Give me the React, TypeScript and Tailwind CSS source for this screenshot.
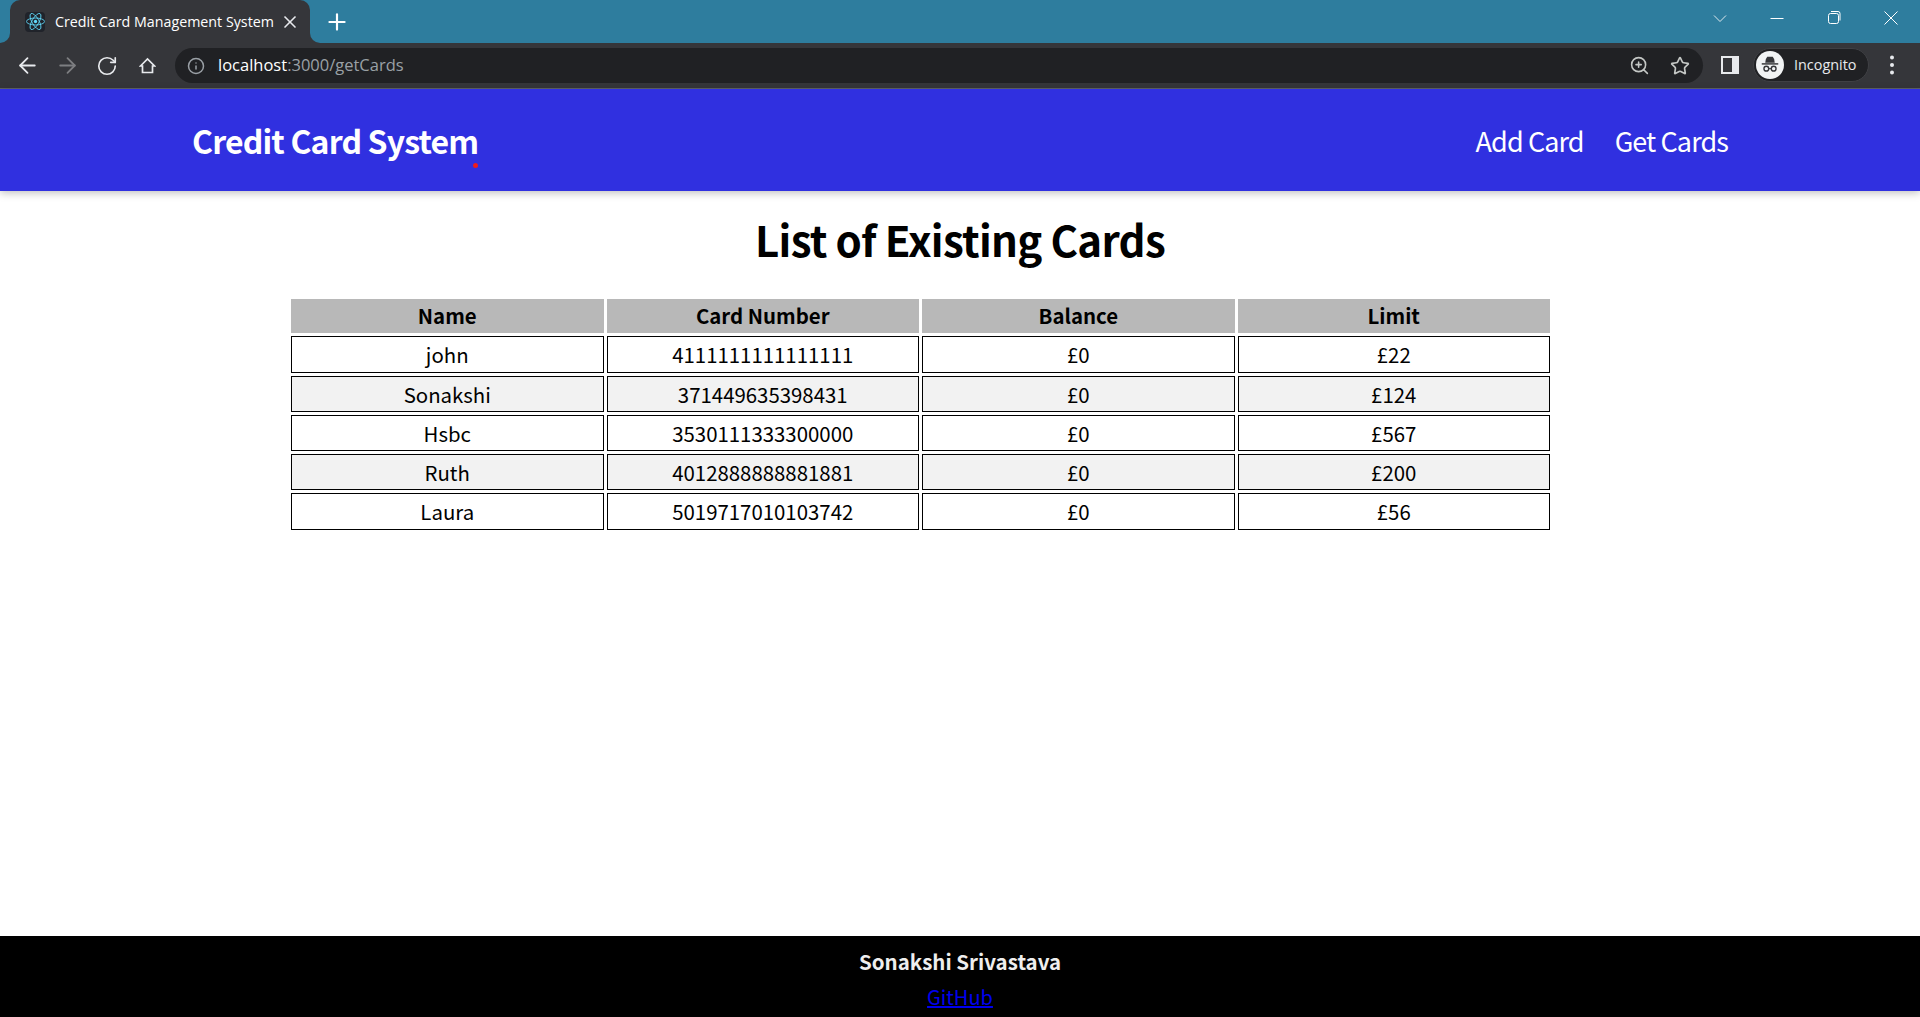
import { ArrowLeft, ArrowRight, Info, Plus, RotateCw, Star, X, ZoomIn } from "lucide-react";

const cards = [
  { name: "john", number: "4111111111111111", balance: "£0", limit: "£22" },
  { name: "Sonakshi", number: "371449635398431", balance: "£0", limit: "£124" },
  { name: "Hsbc", number: "3530111333300000", balance: "£0", limit: "£567" },
  { name: "Ruth", number: "4012888888881881", balance: "£0", limit: "£200" },
  { name: "Laura", number: "5019717010103742", balance: "£0", limit: "£56" },
];

const headers = ["Name", "Card Number", "Balance", "Limit"];

function ReactLogo() {
  return (
    <span className="flex h-5 w-5 items-center justify-center rounded-sm bg-[#20232a]">
      <svg viewBox="-11.5 -10.2 23 20.4" className="h-[19px] w-[19px]" fill="none" stroke="#61dafb" strokeWidth="1">
        <circle r="2.05" fill="#61dafb" stroke="none" />
        <ellipse rx="11" ry="4.2" />
        <ellipse rx="11" ry="4.2" transform="rotate(60)" />
        <ellipse rx="11" ry="4.2" transform="rotate(120)" />
      </svg>
    </span>
  );
}

function WindowControls() {
  return (
    <div className="flex h-[43px] items-start gap-[43px] pt-[11px] pr-[22px]">
      <svg width="14" height="14" viewBox="0 0 14 14" fill="none" stroke="#dfe9ee">
        <path d="M1 4.5 7 10.5 13 4.5" />
      </svg>
      <svg width="14" height="14" viewBox="0 0 14 14" fill="none" stroke="white">
        <path d="M0.5 7.5H13.5" />
      </svg>
      <svg width="14" height="14" viewBox="0 0 14 14" fill="none" stroke="white">
        <rect x="1.5" y="2.5" width="10" height="10" rx="2" />
        <path d="M4 0.5h7a2 2 0 0 1 2 2v7" />
      </svg>
      <svg width="14" height="14" viewBox="0 0 14 14" fill="none" stroke="white">
        <path d="M0.5 0.5 13.5 13.5M13.5 0.5 0.5 13.5" />
      </svg>
    </div>
  );
}

function BrowserChrome() {
  return (
    <div className="font-['Open_Sans',sans-serif]">
      <div className="flex h-[43px] justify-between bg-[#2e7d9e]">
        <div className="flex items-center">
          <div className="relative ml-[10px] flex h-[43px] w-[300px] items-center rounded-t-[10px] bg-[#35363a] pl-[15px] pr-[10px] text-white">
            <span className="absolute bottom-0 -left-[10px] h-[10px] w-[10px] bg-[#35363a]">
              <span className="block h-full w-full rounded-br-[10px] bg-[#2e7d9e]" />
            </span>
            <span className="absolute -right-[10px] bottom-0 h-[10px] w-[10px] bg-[#35363a]">
              <span className="block h-full w-full rounded-bl-[10px] bg-[#2e7d9e]" />
            </span>
            <ReactLogo />
            <span className="ml-[10px] flex-1 text-[14.25px]">Credit Card Management System</span>
            <X size={20} strokeWidth={2} className="text-[#e8eaed]" />
          </div>
          <Plus size={26} strokeWidth={2} className="ml-[14px] text-white" />
        </div>
        <WindowControls />
      </div>
      <div className="flex h-[46px] items-start border-b border-[#5f6368] bg-[#35363a] pt-[5px]">
        <div className="ml-[7px] flex h-[35px] w-[168px] items-center">
          <span className="flex w-10 justify-center"><ArrowLeft size={25} strokeWidth={1.7} className="text-[#e8eaed]" /></span>
          <span className="flex w-10 justify-center"><ArrowRight size={25} strokeWidth={1.7} className="text-[#7d7e81]" /></span>
          <span className="flex w-10 justify-center"><RotateCw size={22} strokeWidth={1.8} className="text-[#e8eaed]" /></span>
          <span className="flex w-10 justify-center">
            <svg width="17" height="17" viewBox="0 0 17 17" fill="none" stroke="#e8eaed" strokeWidth="1.7" strokeLinejoin="miter">
              <path d="M1.5 9 8.5 2 15.5 9H13.5V15.5H3.5V9Z" />
            </svg>
          </span>
        </div>
        <div className="flex h-[35px] w-[1528px] items-center rounded-full bg-[#202124] pl-[12px] pr-[13px]">
          <Info size={18} strokeWidth={2} className="text-[#9aa0a6]" />
          <span className="ml-[13px] flex-1 text-[16.5px] text-[#9aa0a6]">
            <span className="text-white">localhost</span>:3000/getCards
          </span>
          <ZoomIn size={21} strokeWidth={1.8} className="-translate-x-px text-[#c4c7c5]" />
          <Star size={20} strokeWidth={2} className="ml-[19px] text-[#c4c7c5]" />
        </div>
        <div className="mt-[8px] ml-[18px] h-[18px] w-[18px] border-2 border-r-[7px] border-[#e8eaed] bg-[#35363a]" />
        <div className="ml-[14px] flex h-[34px] w-[116px] items-center rounded-full border border-[#3f4044] bg-[#202124] pl-[2px]">
          <span className="flex h-7 w-7 items-center justify-center rounded-full bg-[#f1f3f4]">
            <svg viewBox="0 0 24 24" className="h-[22px] w-[22px]" fill="#35363a">
              <path d="M7.5 5.5 9 3h6l1.5 2.5.7 4H6.8z" />
              <rect x="3" y="10" width="18" height="1.6" />
              <circle cx="8" cy="16" r="2.6" fill="none" stroke="#35363a" strokeWidth="1.5" />
              <circle cx="16" cy="16" r="2.6" fill="none" stroke="#35363a" strokeWidth="1.5" />
              <path d="M10.6 16h2.8" stroke="#35363a" strokeWidth="1.2" />
            </svg>
          </span>
          <span className="ml-[10px] text-[14.4px] text-[#e8eaed]">Incognito</span>
        </div>
        <svg width="20" height="20" viewBox="0 0 20 20" fill="#e8eaed" className="mt-[7px] ml-[13px]">
          <circle cx="10" cy="2.5" r="2" />
          <circle cx="10" cy="10" r="2" />
          <circle cx="10" cy="17.5" r="2" />
        </svg>
      </div>
    </div>
  );
}

export default function App() {
  return (
    <div className="flex h-[1017px] w-full flex-col overflow-hidden bg-white font-['Noto_Sans_CJK_JP',sans-serif]">
      <BrowserChrome />
      <nav className="relative flex h-[102px] items-center justify-between bg-[#3030e0] px-[192px] shadow-[0_2px_8px_rgba(0,0,0,0.25)]">
        <div className="relative text-[32px] leading-[30px] font-bold tracking-[-0.83px] text-white">
          Credit Card System
          <span className="absolute top-[38px] right-0 h-[5px] w-[5px] rounded-full bg-[#ee1c1c]" />
        </div>
        <div className="flex gap-[31px] text-[27px] leading-none tracking-[-0.9px] text-white">
          <span>Add Card</span>
          <span>Get Cards</span>
        </div>
      </nav>
      <main className="flex flex-1 flex-col items-center">
        <h1 className="mt-[23px] text-[42px] leading-[50px] font-bold tracking-[-0.7px] text-black">List of Existing Cards</h1>
        <table className="mt-[32px] ml-[288px] w-[1265px] table-fixed self-start border-separate border-spacing-[3px] text-center text-[20.4px] text-black">
          <thead>
            <tr>
              {headers.map((h) => (
                <th key={h} className="h-[34px] bg-[#b8b8b8] p-0 pb-[2px] leading-none font-bold">{h}</th>
              ))}
            </tr>
          </thead>
          <tbody>
            {cards.map((c) => (
              <tr key={c.name} className="even:bg-[#f2f2f2] [&>td]:h-[36px] first:[&>td]:h-[37px] last:[&>td]:h-[37px]">
                <td className="border border-black p-0 leading-none">{c.name}</td>
                <td className="border border-black p-0 leading-none">{c.number}</td>
                <td className="border border-black p-0 leading-none">{c.balance}</td>
                <td className="border border-black p-0 leading-none">{c.limit}</td>
              </tr>
            ))}
          </tbody>
        </table>
      </main>
      <footer className="flex h-[81px] flex-col items-center bg-black pt-[11px]">
        <p className="text-[20.5px] leading-[28px] font-bold text-[#eeeeee]">Sonakshi Srivastava</p>
        <a href="#" className="mt-[8px] text-[20px] leading-[28px] text-[#0000ee] underline">GitHub</a>
      </footer>
    </div>
  );
}
